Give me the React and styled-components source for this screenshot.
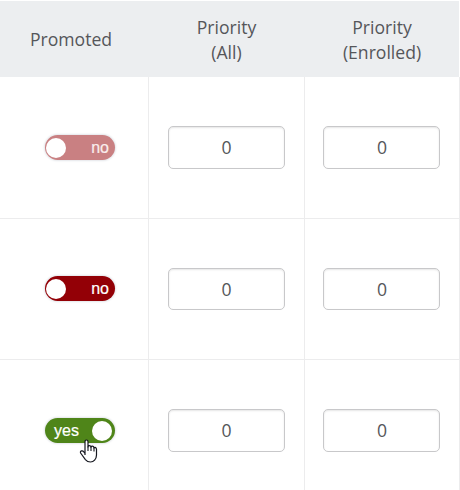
import React, { useState } from "react";
import styled, { createGlobalStyle } from "styled-components";

const GlobalStyle = createGlobalStyle`
  * {
    box-sizing: border-box;
  }
  body {
    margin: 0;
    background: #fff;
    overflow: hidden;
  }
`;

const Table = styled.div`
  position: relative;
  width: 460px;
  height: 490px;
  padding-top: 1px;
  overflow: hidden;
  font-family: "Open Sans", sans-serif;
  font-size: 17.6px;
  color: #55565a;
`;

const Row = styled.div`
  display: grid;
  grid-template-columns: 149px 156px 155px;
  height: ${(props) => props.$height}px;
`;

const HeaderRow = styled(Row)`
  width: 459px;
  background: #eceef0;
  overflow: hidden;
`;

const HeaderCell = styled.div`
  display: flex;
  align-items: center;
  justify-content: center;
  padding-right: ${(props) => (props.$first ? 7 : 1)}px;
  padding-top: ${(props) => (props.$first ? 0 : 1)}px;
  line-height: 25px;
  text-align: center;
`;

const Cell = styled.div`
  display: flex;
  align-items: flex-start;
  justify-content: center;
  padding-top: 49px;
  padding-right: ${(props) => (props.$last ? 1 : 0)}px;
  border-right: 1px solid #ececed;
  border-bottom: 1px solid #ececed;
`;

const ToggleCell = styled(Cell)`
  justify-content: flex-start;
  padding-top: ${(props) => (props.$raised ? 57 : 58)}px;
  padding-left: 45px;
`;

const Toggle = styled.button`
  display: flex;
  align-items: center;
  justify-content: space-between;
  flex-direction: ${(props) => (props.$on ? "row-reverse" : "row")};
  width: 70px;
  height: 25px;
  padding: ${(props) => (props.$on ? "0 3px 0 9px" : "0 6px 0 1px")};
  border: 0;
  border-radius: 13px;
  background: ${(props) => (props.$on ? "#4f8519" : "#930006")};
  box-shadow: 0 0 2px 1px #e4e6ea;
  color: #fff;
  font-family: "Liberation Sans", Arial, sans-serif;
  font-size: 16px;
  line-height: 25px;
  -webkit-text-stroke: 0.2px currentColor;
  cursor: pointer;

  &:disabled {
    background: #c98082;
    color: #f9eded;
    cursor: default;
  }
`;

const Knob = styled.span`
  width: 20px;
  height: 20px;
  border-radius: 50%;
  background: #fff;
`;

const PriorityInput = styled.input`
  width: 117px;
  height: ${(props) => (props.$short ? 42 : 43)}px;
  padding: 0 0 1px ${(props) => (props.$last ? 1 : 0)}px;
  border: 1px solid #c8c8ca;
  border-radius: 5px;
  background: #fff;
  box-shadow: inset 0 1px 2px rgba(0, 0, 0, 0.1);
  color: #55565a;
  font: inherit;
  text-align: center;
  outline: none;
`;

const Pointer = styled.svg`
  position: absolute;
  top: 439px;
  left: 79px;
  width: 19px;
  height: 25px;
  pointer-events: none;
`;

const HEADERS = [["Promoted"], ["Priority", "(All)"], ["Priority", "(Enrolled)"]];

const ROWS = [
  { id: 1, height: 142, promoted: false, disabled: true },
  { id: 2, height: 141, promoted: false, compact: true },
  { id: 3, height: 142, promoted: true },
];

const PromotedToggle = ({ initial, disabled }) => {
  const [on, setOn] = useState(initial);

  return (
    <Toggle $on={on} disabled={disabled} onClick={() => setOn(!on)}>
      <Knob />
      <span>{on ? "yes" : "no"}</span>
    </Toggle>
  );
};

const App = () => (
  <>
    <GlobalStyle />
    <Table>
      <HeaderRow $height={76}>
        {HEADERS.map((lines, index) => (
          <HeaderCell key={index} $first={index === 0}>
            <div>
              {lines.map((line) => (
                <div key={line}>{line}</div>
              ))}
            </div>
          </HeaderCell>
        ))}
      </HeaderRow>
      {ROWS.map((row) => (
        <Row key={row.id} $height={row.height}>
          <ToggleCell $raised={row.compact}>
            <PromotedToggle initial={row.promoted} disabled={row.disabled} />
          </ToggleCell>
          <Cell>
            <PriorityInput $short={row.compact} defaultValue="0" />
          </Cell>
          <Cell $last>
            <PriorityInput $last $short={row.compact} defaultValue="0" />
          </Cell>
        </Row>
      ))}
      <Pointer viewBox="0 0 19 25">
        <path
          d="M6 16V2.8Q6 1 7.5 1T9 2.8V8Q9 6.6 10.4 6.6T12 8.2Q12.2 7.2 13.4 7.2T15 9Q15.2 8.2 16.2 8.4T17.5 10.2V16Q17.5 19 15.6 21.2Q14 23 11.5 23Q8.4 23 6.4 20.6L1.6 14Q1 12.4 2.4 11.9T4.8 12.8L6 14.4"
          fill="#fff"
          stroke="#15171f"
          strokeWidth="1.2"
          strokeLinejoin="round"
        />
        <path d="M9 7.5V12M12 8V12M15 9V12.5" stroke="#15171f" strokeWidth="1.1" />
      </Pointer>
    </Table>
  </>
);

export default App;
